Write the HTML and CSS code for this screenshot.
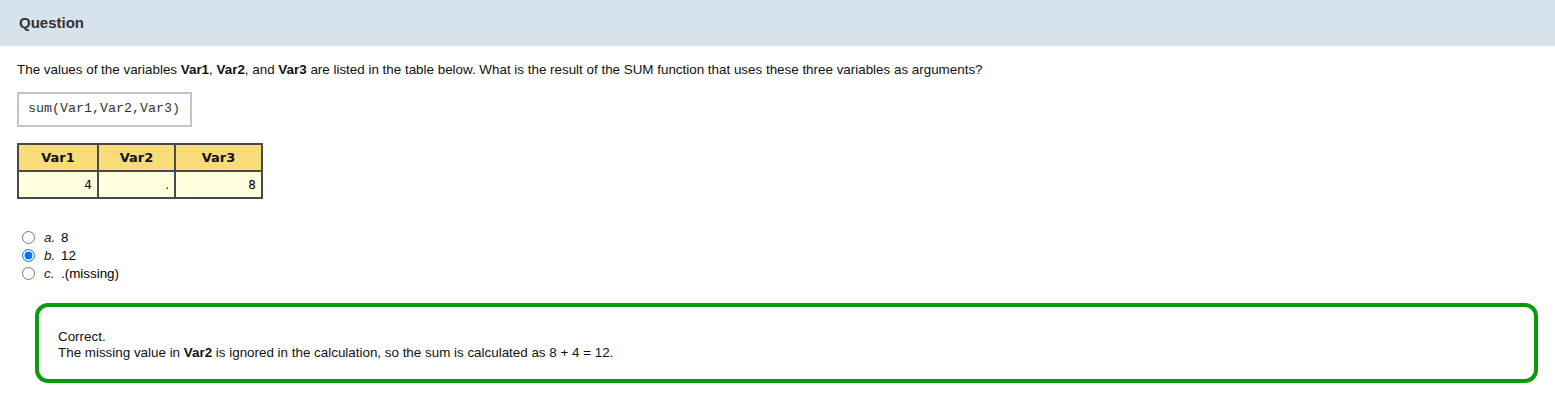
FILE: index.html
```html
<!DOCTYPE html>
<html>
<head>
<meta charset="utf-8">
<link rel="stylesheet" href="styles.css">
</head>
<body>
<div class="header"><h1 class="title">Question</h1></div>
<div class="content">
  <p class="stem">The values of the variables <b>Var1</b>, <b>Var2</b>, and <b>Var3</b> are listed in the table below. What is the result of the SUM function that uses these three variables as arguments?</p>
  <div class="code">sum(Var1,Var2,Var3)</div>
  <table class="data">
    <thead>
      <tr><th class="c1">Var1</th><th class="c2">Var2</th><th class="c3">Var3</th></tr>
    </thead>
    <tbody>
      <tr><td>4</td><td>.</td><td>8</td></tr>
    </tbody>
  </table>
  <div class="answers">
    <label class="answer"><input type="radio" name="q"><span class="letter">a.</span><span>8</span></label>
    <label class="answer"><input type="radio" name="q" checked><span class="letter">b.</span><span>12</span></label>
    <label class="answer"><input type="radio" name="q"><span class="letter">c.</span><span>.(missing)</span></label>
  </div>
  <div class="feedback">
    <div>Correct.</div>
    <div>The missing value in <b>Var2</b> is ignored in the calculation, so the sum is calculated as 8 + 4 = 12.</div>
  </div>
</div>
</body>
</html>
```
FILE: styles.css
```css
html, body {
  margin: 0;
  padding: 0;
  background: #ffffff;
  font-family: "Liberation Sans", Arial, sans-serif;
  color: #000;
}
.header {
  background: #d6e3ec;
  height: 46px;
  display: flex;
  align-items: center;
  padding-left: 19px;
}
.title {
  margin: 0;
  font-size: 15px;
  font-weight: bold;
  color: #333333;
  position: relative;
  top: -1px;
}
.content {
  padding: 0 17px 0 17px;
}
.stem {
  margin: 16px 0 0 0;
  font-size: 13.4px;
  line-height: 16px;
  color: #111;
}
.code {
  display: inline-block;
  margin-top: 14px;
  border: 2px solid #c4c4c4;
  padding: 8px 10px 9px 9px;
  font-family: "Liberation Mono", "Courier New", monospace;
  font-size: 13.33px;
  line-height: 14px;
  color: #333;
}
.data {
  margin-top: 16px;
  border-collapse: collapse;
  border: 2px solid #4a4a4a;
  font-family: "DejaVu Sans", Verdana, sans-serif;
  font-size: 13px;
}
.data th, .data td {
  border: 2px solid #4a4a4a;
  height: 25px;
  padding: 0 5px;
}
.data th {
  background: #f8dc7a;
  font-weight: bold;
  text-align: center;
  color: #111;
}
.data td {
  background: #ffffe0;
  text-align: right;
  font-size: 12px;
}
.c1 { width: 68px; }
.c2 { width: 65px; }
.c3 { width: 75px; }
.answers {
  margin-top: 29px;
  display: flex;
  flex-direction: column;
  font-size: 13.4px;
}
.answer {
  display: flex;
  align-items: center;
  height: 18px;
}
.answer input {
  margin: 0 9px 0 5px;
  width: 13px;
  height: 13px;
}
.letter {
  font-style: italic;
  width: 17px;
  color: #222;
}
.feedback {
  margin: 21px 0 0 18px;
  border: 4px solid #0a9a0a;
  border-radius: 13px;
  padding: 22px 19px 18px 19px;
  font-size: 13.4px;
  line-height: 16px;
  color: #111;
}
```
